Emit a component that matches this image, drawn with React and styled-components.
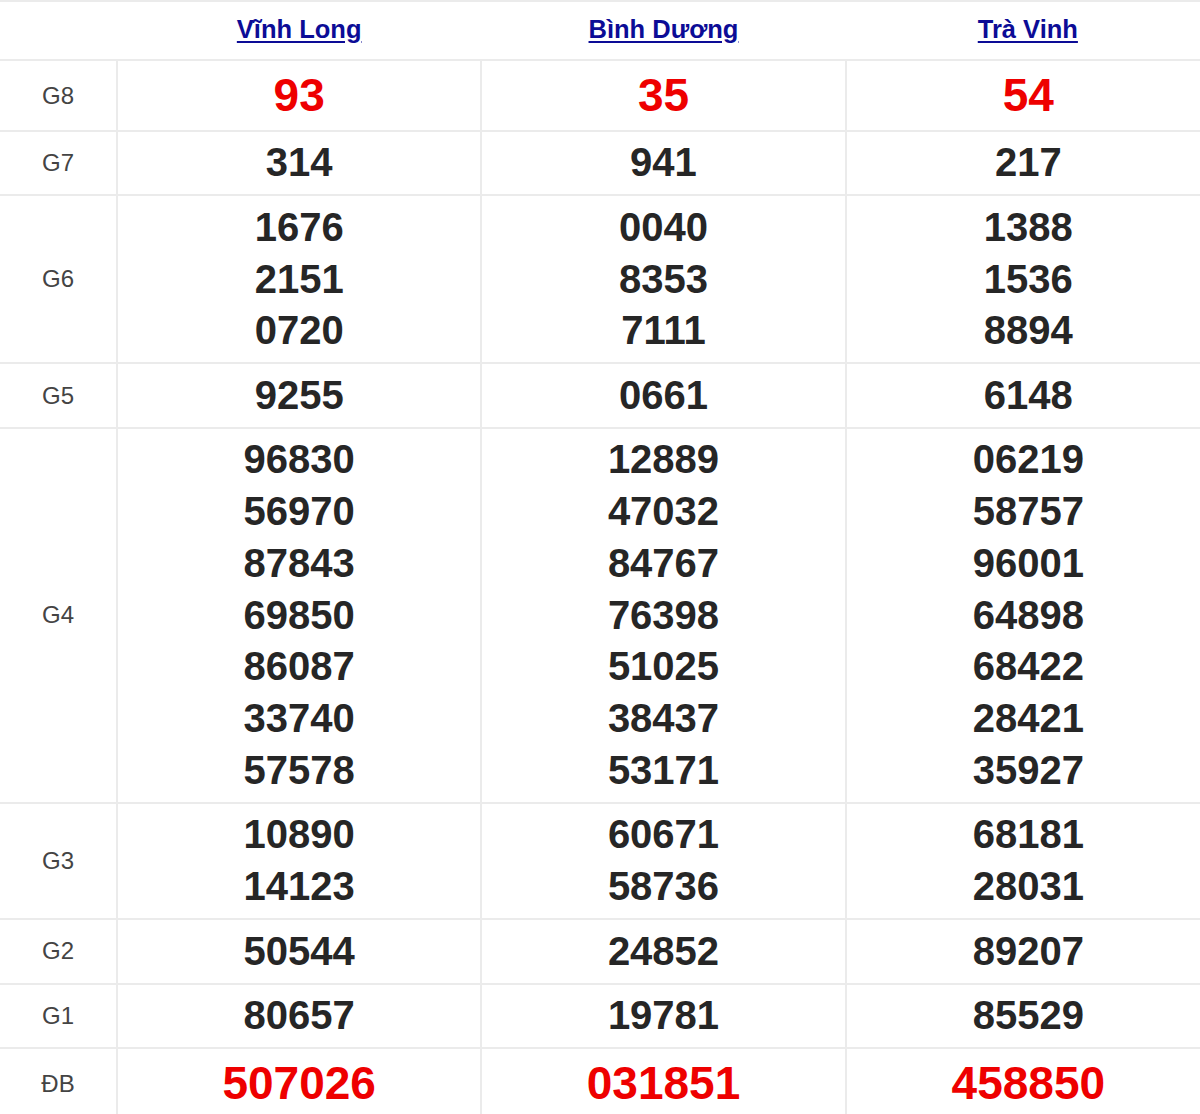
import React from "react";
import styled, { createGlobalStyle } from "styled-components";

const GlobalStyle = createGlobalStyle`
  body {
    margin: 0;
    background: #ffffff;
    overflow: hidden;
    font-family: "Liberation Sans", Arial, sans-serif;
  }
`;

const provinces = ["Vĩnh Long", "Bình Dương", "Trà Vinh"];

const prizes = [
  { name: "G8", big: true, values: [["93"], ["35"], ["54"]] },
  { name: "G7", values: [["314"], ["941"], ["217"]] },
  {
    name: "G6",
    values: [
      ["1676", "2151", "0720"],
      ["0040", "8353", "7111"],
      ["1388", "1536", "8894"],
    ],
  },
  { name: "G5", values: [["9255"], ["0661"], ["6148"]] },
  {
    name: "G4",
    values: [
      ["96830", "56970", "87843", "69850", "86087", "33740", "57578"],
      ["12889", "47032", "84767", "76398", "51025", "38437", "53171"],
      ["06219", "58757", "96001", "64898", "68422", "28421", "35927"],
    ],
  },
  {
    name: "G3",
    values: [
      ["10890", "14123"],
      ["60671", "58736"],
      ["68181", "28031"],
    ],
  },
  { name: "G2", values: [["50544"], ["24852"], ["89207"]] },
  { name: "G1", values: [["80657"], ["19781"], ["85529"]] },
  { name: "ĐB", big: true, values: [["507026"], ["031851"], ["458850"]] },
];

export default function App() {
  return (
    <>
      <GlobalStyle />
      <Table>
        <colgroup>
          <LabelCol />
          <col />
          <col />
          <col />
        </colgroup>
        <thead>
          <HeadRow>
            <HeadCell />
            {provinces.map((p) => (
              <HeadCell key={p}>
                <ProvinceLink href="#">{p}</ProvinceLink>
              </HeadCell>
            ))}
          </HeadRow>
        </thead>
        <tbody>
          {prizes.map((prize) => (
            <Row key={prize.name}>
              <Label>{prize.name}</Label>
              {prize.values.map((list, i) => (
                <NumberCell key={i}>
                  {list.map((n) => (
                    <Num key={n} $big={prize.big}>
                      {n}
                    </Num>
                  ))}
                </NumberCell>
              ))}
            </Row>
          ))}
        </tbody>
      </Table>
    </>
  );
}

const Table = styled.table`
  width: 1210px;
  border-collapse: collapse;
  table-layout: fixed;
  border-top: 2px solid #ebebeb;
`;

const LabelCol = styled.col`
  width: 117px;
`;

const HeadRow = styled.tr`
  height: 59px;
  border-bottom: 2px solid #ebebeb;
`;

const HeadCell = styled.th`
  padding: 0;
  text-align: center;
  vertical-align: middle;
`;

const ProvinceLink = styled.a`
  position: relative;
  top: -1px;
  font-family: "Liberation Sans", Arial, sans-serif;
  font-weight: 700;
  font-size: 25.5px;
  color: #0c0c96;
  text-decoration: underline;
  text-underline-offset: 3px;
`;

const Row = styled.tr`
  border-bottom: 2px solid #ebebeb;
  &:last-child {
    border-bottom: none;
  }
`;

const Label = styled.td`
  padding: 0;
  text-align: center;
  vertical-align: middle;
  font-size: 24px;
  color: #444444;
`;

const NumberCell = styled.td`
  padding: 5.3px 0;
  border-left: 2px solid #ebebeb;
  text-align: center;
  vertical-align: middle;
`;

const Num = styled.div`
  font-family: "Liberation Sans", Arial, sans-serif;
  font-weight: 700;
  font-size: ${(p) => (p.$big ? "46px" : "40px")};
  line-height: ${(p) => (p.$big ? "58.5px" : "51.8px")};
  color: ${(p) => (p.$big ? "#ee0000" : "#262626")};
`;
